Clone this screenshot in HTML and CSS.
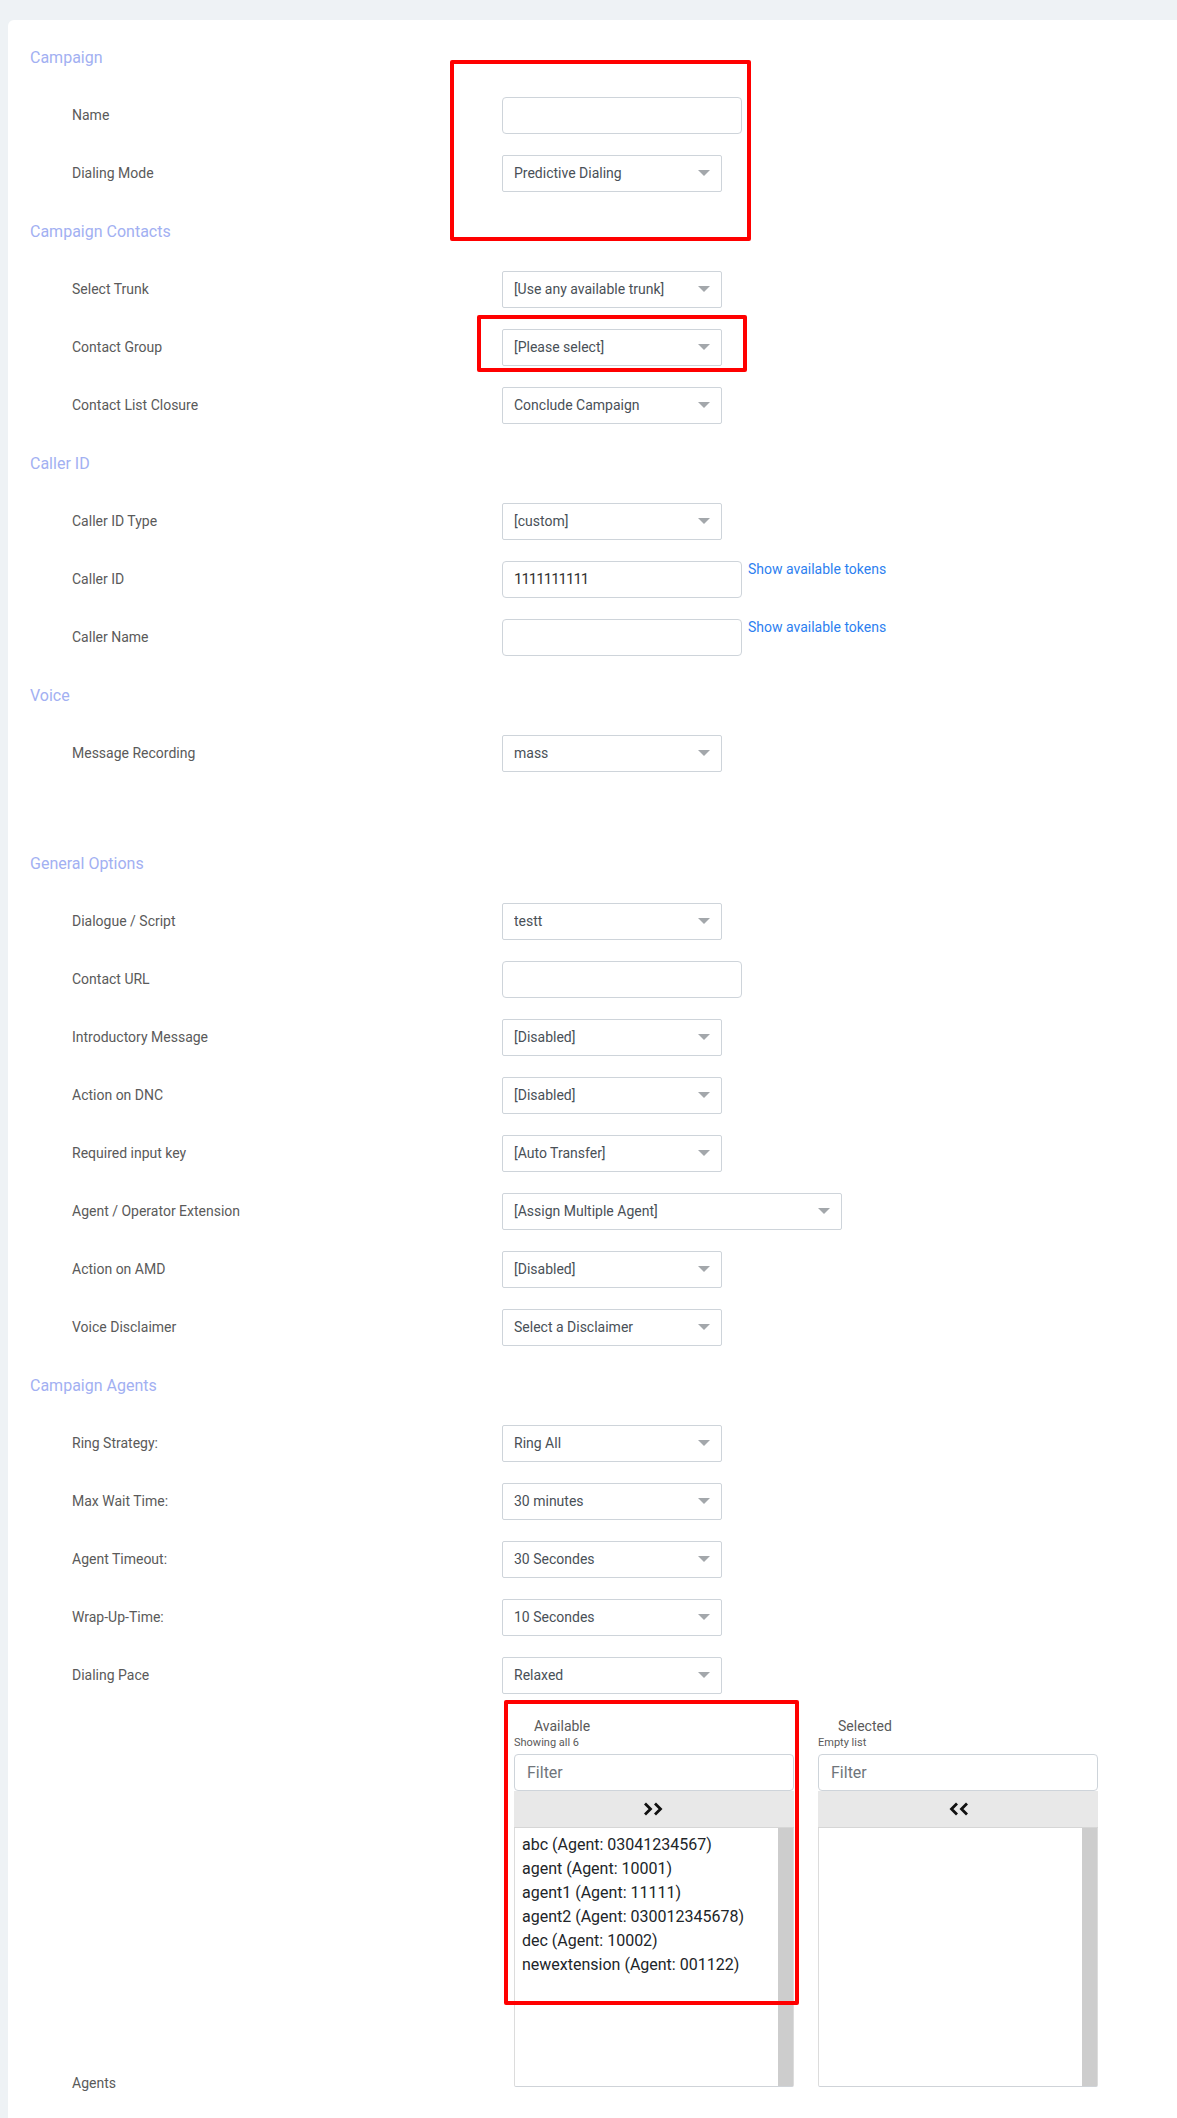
FILE: index.html
```html
<!DOCTYPE html>
<html lang="en">
<head>
    <meta charset="UTF-8">
    <meta name="viewport" content="width=device-width, initial-scale=1.0">
    <title>Campaign Settings</title>
    <link rel="stylesheet" href="styles.css">
</head>
<body>

    <div class="panel">
        <div class="section">Campaign</div>
        <div class="row"><label>Name</label><input class="field" type="text"></div>
        <div class="row"><label>Dialing Mode</label><div class="select"><select><option>Predictive Dialing</option></select></div></div>

        <div class="section">Campaign Contacts</div>
        <div class="row"><label>Select Trunk</label><div class="select"><select><option>[Use any available trunk]</option></select></div></div>
        <div class="row"><label>Contact Group</label><div class="select"><select><option>[Please select]</option></select></div></div>
        <div class="row"><label>Contact List Closure</label><div class="select"><select><option>Conclude Campaign</option></select></div></div>

        <div class="section">Caller ID</div>
        <div class="row"><label>Caller ID Type</label><div class="select"><select><option>[custom]</option></select></div></div>
        <div class="row">
            <label>Caller ID</label>
            <div class="with-link">
                <input class="field value" type="text" value="1111111111">
                <a href="#" class="tokens">Show available tokens</a>
            </div>
        </div>
        <div class="row">
            <label>Caller Name</label>
            <div class="with-link">
                <input class="field" type="text">
                <a href="#" class="tokens">Show available tokens</a>
            </div>
        </div>

        <div class="section">Voice</div>
        <div class="row"><label>Message Recording</label><div class="select"><select><option>mass</option></select></div></div>
        <div class="spacer"></div>

        <div class="section">General Options</div>
        <div class="row"><label>Dialogue / Script</label><div class="select"><select><option>testt</option></select></div></div>
        <div class="row"><label>Contact URL</label><input class="field" type="text"></div>
        <div class="row"><label>Introductory Message</label><div class="select"><select><option>[Disabled]</option></select></div></div>
        <div class="row"><label>Action on DNC</label><div class="select"><select><option>[Disabled]</option></select></div></div>
        <div class="row"><label>Required input key</label><div class="select"><select><option>[Auto Transfer]</option></select></div></div>
        <div class="row"><label>Agent / Operator Extension</label><div class="select wide"><select><option>[Assign Multiple Agent]</option></select></div></div>
        <div class="row"><label>Action on AMD</label><div class="select"><select><option>[Disabled]</option></select></div></div>
        <div class="row"><label>Voice Disclaimer</label><div class="select"><select><option>Select a Disclaimer</option></select></div></div>

        <div class="section">Campaign Agents</div>
        <div class="row"><label>Ring Strategy:</label><div class="select"><select><option>Ring All</option></select></div></div>
        <div class="row"><label>Max Wait Time:</label><div class="select"><select><option>30 minutes</option></select></div></div>
        <div class="row"><label>Agent Timeout:</label><div class="select"><select><option>30 Secondes</option></select></div></div>
        <div class="row"><label>Wrap-Up-Time:</label><div class="select"><select><option>10 Secondes</option></select></div></div>
        <div class="row"><label>Dialing Pace</label><div class="select"><select><option>Relaxed</option></select></div></div>

        <div class="row dual-row">
            <label class="agents-label">Agents</label>
            <div class="dual">
                <div class="dl-col">
                    <div class="dl-title">Available</div>
                    <div class="dl-info">Showing all 6</div>
                    <input class="dl-filter" type="text" placeholder="Filter">
                    <button class="dl-move">
                        <svg width="24" height="14" viewBox="0 0 24 14"><path d="M3 1.5 L8.5 7 L3 12.5 M13 1.5 L18.5 7 L13 12.5" fill="none" stroke="#111" stroke-width="2.8"/></svg>
                    </button>
                    <div class="dl-list">
                        <ul class="dl-items">
                            <li>abc (Agent: 03041234567)</li>
                            <li>agent (Agent: 10001)</li>
                            <li>agent1 (Agent: 11111)</li>
                            <li>agent2 (Agent: 030012345678)</li>
                            <li>dec (Agent: 10002)</li>
                            <li>newextension (Agent: 001122)</li>
                        </ul>
                        <div class="dl-scroll"></div>
                    </div>
                </div>
                <div class="dl-col">
                    <div class="dl-title">Selected</div>
                    <div class="dl-info">Empty list</div>
                    <input class="dl-filter" type="text" placeholder="Filter">
                    <button class="dl-move">
                        <svg width="24" height="14" viewBox="0 0 24 14"><path d="M11 1.5 L5.5 7 L11 12.5 M21 1.5 L15.5 7 L21 12.5" fill="none" stroke="#111" stroke-width="2.8"/></svg>
                    </button>
                    <div class="dl-list">
                        <ul class="dl-items"></ul>
                        <div class="dl-scroll"></div>
                    </div>
                </div>
            </div>
        </div>
    </div>

    <!-- review marks -->
    <div class="mark mark-mode"></div>
    <div class="mark mark-group"></div>
    <div class="mark mark-agents"></div>

</body>
</html>
```

FILE: styles.css
```css
* {
    margin: 0;
    padding: 0;
    box-sizing: border-box;
}

body {
    position: relative;
    min-height: 2118px;
    padding: 20px 0 0 8px;
    background-color: #eef2f5;
    font-family: Roboto, "Noto Sans", sans-serif;
    overflow-x: hidden;
}

.panel {
    background-color: #fff;
    border-radius: 6px 0 0 0;
    padding: 8px 0 40px 22px;
    min-height: 2098px;
}

.section {
    height: 58px;
    display: flex;
    align-items: center;
    font-size: 16px;
    color: #a2b0f2;
}

.row {
    height: 58px;
    display: flex;
    align-items: center;
    padding-left: 42px;
}

.row label {
    width: 430px;
    flex-shrink: 0;
    font-size: 14px;
    color: #5a5a5a;
}

.spacer {
    height: 52px;
}

.field {
    width: 240px;
    height: 37px;
    border: 1px solid #ced4da;
    border-radius: 4px;
    padding: 0 11px;
    font-family: inherit;
    font-size: 15px;
    color: #333;
    outline: none;
}

.field.value {
    letter-spacing: -1px;
}

.with-link {
    display: flex;
    align-items: flex-start;
    gap: 6px;
}

.tokens {
    font-size: 14px;
    line-height: 17px;
    color: #2d7ff0;
    text-decoration: none;
}

.select {
    position: relative;
    width: 220px;
    height: 37px;
}

.select.wide {
    width: 340px;
}

.select select {
    appearance: none;
    -webkit-appearance: none;
    width: 100%;
    height: 100%;
    border: 1px solid #ced4da;
    border-radius: 2px;
    background: #fff;
    padding: 0 30px 0 11px;
    font-family: inherit;
    font-size: 14px;
    color: #495057;
}

.select::after {
    content: "";
    position: absolute;
    right: 12px;
    top: 50%;
    margin-top: -3px;
    border-left: 6px solid transparent;
    border-right: 6px solid transparent;
    border-top: 6px solid #a3a7ab;
    pointer-events: none;
}

/* agents picker */
.dual-row {
    height: auto;
    align-items: flex-end;
}

.agents-label {
    margin-bottom: -6px;
    line-height: 20px;
}

.dual {
    display: flex;
    gap: 24px;
    padding: 12px 0 0 12px;
}

.dl-col {
    width: 280px;
    display: flex;
    flex-direction: column;
}

.dl-title {
    padding-left: 20px;
    font-size: 14px;
    line-height: 20px;
    color: #5a5a5a;
}

.dl-info {
    font-size: 11px;
    line-height: 14px;
    color: #5a5a5a;
}

.dl-filter {
    margin-top: 4px;
    height: 37px;
    border: 1px solid #ced4da;
    border-radius: 4px;
    padding: 0 12px;
    font-family: inherit;
    font-size: 16px;
    color: #333;
    outline: none;
}

.dl-filter::placeholder {
    color: #6f757b;
}

.dl-move {
    height: 37px;
    border: none;
    border-bottom: 1px solid #d6d6d6;
    background-color: #e8e8e8;
    display: flex;
    align-items: center;
    justify-content: center;
    cursor: pointer;
}

.dl-list {
    height: 259px;
    display: flex;
    border: 1px solid #dcdcdc;
    border-top: none;
    border-bottom-color: #cfd3d8;
    border-radius: 0 0 2px 2px;
}

.dl-items {
    flex: 1;
    list-style: none;
    padding: 5px 7px;
    font-size: 16px;
    line-height: 24px;
    color: #212529;
}

.dl-scroll {
    width: 15px;
    background-color: #cdcdcd;
}

/* red review marks drawn over the form */
.mark {
    position: absolute;
    border: 4px solid #ff0000;
    border-radius: 2px;
    pointer-events: none;
}

.mark-mode {
    left: 450px;
    top: 60px;
    width: 301px;
    height: 181px;
}

.mark-group {
    left: 477px;
    top: 315px;
    width: 270px;
    height: 57px;
}

.mark-agents {
    left: 504px;
    top: 1700px;
    width: 295px;
    height: 305px;
}
```
